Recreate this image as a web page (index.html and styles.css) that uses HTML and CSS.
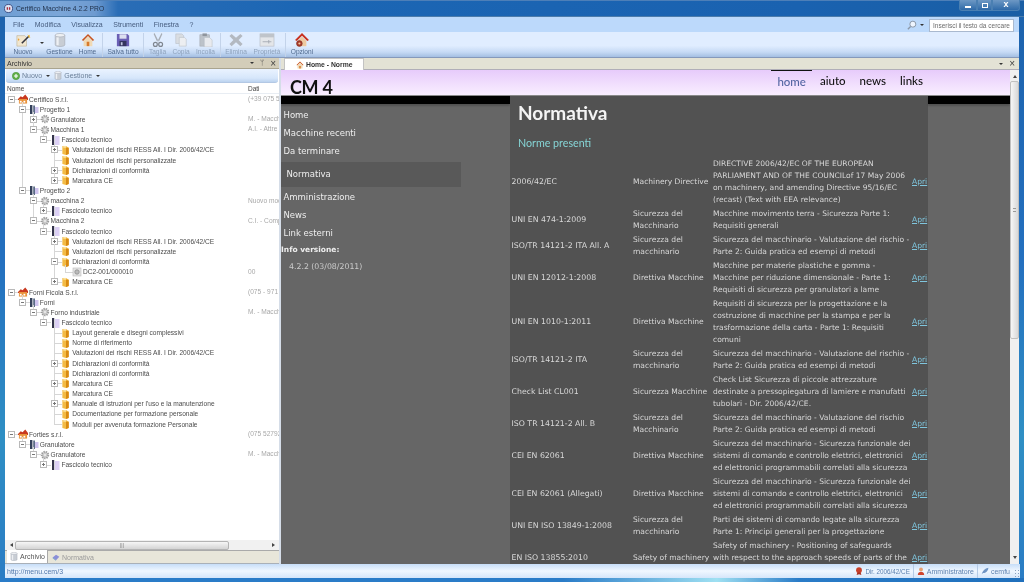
FILE: index.html
```html
<!DOCTYPE html>
<html lang="it">
<head>
<meta charset="utf-8">
<title>Certifico Macchine 4.2.2 PRO</title>
<link rel="stylesheet" href="styles.css">
</head>
<body>
<svg class="defs" width="0" height="0" aria-hidden="true">
  <symbol id="i-folder" viewBox="0 0 10 11"><path d="M1 1l4 0 3 2v7l-3 1-4-1z" fill="#f3bb45"/><path d="M5 3h3v7l-3 1z" fill="#d88a12"/><path d="M2 1h3v2H2z" fill="#fbe3a0"/></symbol>
  <symbol id="i-gear" viewBox="0 0 10 10"><circle cx="5" cy="5" r="3.2" fill="#d8d8d8" stroke="#9a9a9a" stroke-width="2" stroke-dasharray="1.3 .9"/><circle cx="5" cy="5" r="1.5" fill="#f2f2f2" stroke="#aaa" stroke-width=".5"/></symbol>
  <symbol id="i-binder" viewBox="0 0 10 10"><rect x="5" y="1" width="4.5" height="9" fill="#dcd0f5"/><rect x="2" y="0" width="2.2" height="10" fill="#34344c"/></symbol>
  <symbol id="i-proj" viewBox="0 0 10 10"><rect x="6" y="3" width="3.5" height="6" fill="#cfc4ee"/><rect x="1" y="1" width="2.4" height="9" fill="#34405a"/><rect x="4.2" y="1.5" width="1.8" height="8.5" fill="#5b6b86"/></symbol>
  <symbol id="i-co" viewBox="0 0 11 10"><path d="M0 5l3-3 2 1 3-3 3 4v2H0z" fill="#c8381e"/><rect x="1" y="5" width="9" height="5" fill="#e9923a"/><rect x="2" y="7" width="2" height="2" fill="#fff"/><rect x="6" y="7" width="2" height="2" fill="#fff"/></symbol>
  <symbol id="i-doc" viewBox="0 0 10 10"><rect x="1" y="1" width="8" height="8" fill="#e4e4e4" stroke="#bbb" stroke-width=".6"/><circle cx="5" cy="5" r="2.2" fill="#bbb" stroke="#8e8e8e" stroke-width=".8"/></symbol>
  <symbol id="i-cyl" viewBox="0 0 14 16"><path d="M1.5 2.5v11c0 1.2 2.400 2 5.500 2s5.500-.8 5.500-2v-11z" fill="#c8cdd4" stroke="#9aa0aa" stroke-width=".6"/><ellipse cx="7" cy="2.500" rx="5.500" ry="2" fill="#eef0f3" stroke="#9aa0aa" stroke-width=".6"/><rect x="3" y="5" width="2.500" height="9" fill="#eef0f3"/></symbol>
  <symbol id="i-house" viewBox="0 0 16 16"><path d="M8 1L1 8l1.500 1L8 3.500 13.500 9 15 8z" fill="#c8541e"/><path d="M3 9l5-5 5 5v6H3z" fill="#f0d9b5"/><rect x="6.500" y="10" width="3" height="5" fill="#d77a2c"/></symbol>
  <symbol id="i-wand" viewBox="0 0 18 16"><path d="M2 3h9l2 2v10H2z" fill="#f1e6cf" stroke="#b7a98a" stroke-width=".6"/><path d="M7 11l8-8 1.300 1.300-8 8z" fill="#34343e"/><path d="M14 1l1 1.500 1.800-.4-.5 1.700 1.200 1.200-1.800.3" fill="#f2b72c"/><path d="M4 6l1 1.500L4 9 3 7.500z" fill="#e9a23a"/></symbol>
  <symbol id="i-floppy" viewBox="0 0 16 16"><path d="M1 1h12l2 2v12H1z" fill="#6a5fb5"/><rect x="4" y="1.500" width="8" height="5" fill="#dcdff0"/><rect x="4" y="9" width="8" height="6" fill="#34345e"/><rect x="5.500" y="10.500" width="2" height="3.500" fill="#bfc3dd"/></symbol>
  <symbol id="i-scissors" viewBox="0 0 14 16"><path d="M3 0l5 10-1.500 1L2 1zM11 0L6 10l1.500 1L12 1z" fill="#a7adb5"/><circle cx="4" cy="13" r="2.200" fill="none" stroke="#7f8690" stroke-width="1.400"/><circle cx="10" cy="13" r="2.200" fill="none" stroke="#7f8690" stroke-width="1.400"/></symbol>
  <symbol id="i-copy" viewBox="0 0 14 16"><path d="M1 1h7l2 2v9H1z" fill="#d9dde2" stroke="#b4bac2" stroke-width=".6"/><path d="M5 5h6l2 2v8H5z" fill="#eceef1" stroke="#b4bac2" stroke-width=".6"/></symbol>
  <symbol id="i-paste" viewBox="0 0 16 16"><rect x="1" y="2" width="11" height="13" fill="#bcc2c9" stroke="#a0a6ae" stroke-width=".6"/><rect x="4" y="0.500" width="5" height="3" fill="#8f959d"/><path d="M6 5h6l3 3v8H6z" fill="#e8eaee" stroke="#b4bac2" stroke-width=".6"/></symbol>
  <symbol id="i-x" viewBox="0 0 16 16"><path d="M3 1l5 4.500L13 1l2.500 2.500L11 8l4.500 4.500L13 15l-5-4.500L3 15 .5 12.500 5 8 .5 3.500z" fill="#b3b9c1"/></symbol>
  <symbol id="i-props" viewBox="0 0 18 16"><rect x="1" y="1" width="16" height="14" fill="#e4e6e9" stroke="#b4bac2" stroke-width=".7"/><rect x="1" y="1" width="16" height="4" fill="#bfc4ca"/><path d="M4 10h10M11 8v4" stroke="#a2a8b0" stroke-width="1"/></symbol>
  <symbol id="i-opt" viewBox="0 0 18 16"><path d="M9 0L1 8l2 1 6-6 6 6 2-1z" fill="#c8301e"/><path d="M4 9l5-5 5 5v6H4z" fill="#eec9a0"/><circle cx="6" cy="12" r="3.300" fill="#a83a2a" stroke="#7a2a20" stroke-width=".6"/><circle cx="6" cy="12" r="1.200" fill="#eec9a0"/></symbol>
  <symbol id="i-plus" viewBox="0 0 10 10"><circle cx="5" cy="5" r="4.600" fill="#62b14a" stroke="#468a36" stroke-width=".6"/><path d="M5 2.500v5M2.500 5h5" stroke="#fff" stroke-width="1.400"/></symbol>
  <symbol id="i-norm" viewBox="0 0 12 10"><path d="M1 5l5-4 5 3-5 5z" fill="#8a8fd8"/><path d="M1 5l5 4v1L1 6z" fill="#5a9ac0"/></symbol>
  <symbol id="i-ribbon" viewBox="0 0 10 10"><circle cx="5" cy="4" r="3.600" fill="#c8402a"/><path d="M3 7l-1 3 3-1 3 1-1-3z" fill="#a83020"/></symbol>
  <symbol id="i-user" viewBox="0 0 10 10"><circle cx="5" cy="3" r="2.400" fill="#e8a070"/><path d="M1 10c0-3 2-4 4-4s4 1 4 4z" fill="#d0452e"/></symbol>
  <symbol id="i-feather" viewBox="0 0 12 10"><path d="M1 10C2 5 6 1 11 0c0 4-3 8-8 8z" fill="#6f94c4"/></symbol>
  <symbol id="i-search" viewBox="0 0 12 12"><circle cx="7" cy="5" r="3.600" fill="#eef5ff" stroke="#8b98a8" stroke-width="1.200"/><path d="M4.300 7.700L1 11" stroke="#8b98a8" stroke-width="1.600"/></symbol>
  <symbol id="i-app" viewBox="0 0 10 10"><circle cx="5" cy="5" r="4.500" fill="#dfe4f4" stroke="#36487e" stroke-width="1"/><path d="M3 3.500h1.500v3H3zM5.500 3.500H7v3H5.500z" fill="#a82a3a"/></symbol>
</svg>

<div class="app">
  <header class="titlebar">
    <svg class="ico-app"><use href="#i-app"/></svg>
    <span class="title">Certifico Macchine 4.2.2 PRO</span>
    <div class="winbtns">
      <span class="wb wb-min"><i></i></span>
      <span class="wb wb-max"><i></i></span>
      <span class="wb wb-close">x</span>
    </div>
  </header>

  <nav class="menubar">
    <span class="mi m-file">File</span>
    <span class="mi">Modifica</span>
    <span class="mi">Visualizza</span>
    <span class="mi">Strumenti</span>
    <span class="mi">Finestra</span>
    <span class="mi">?</span>
    <div class="search">
      <svg class="ico-search"><use href="#i-search"/></svg>
      <span class="arrow dark"></span>
      <div class="search-box">Inserisci il testo da cercare</div>
    </div>
  </nav>

  <div class="toolbar">
    <div class="tb tb-nuovo"><svg><use href="#i-wand"/></svg><span>Nuovo</span></div>
    <span class="arrow black tb-arrow"></span>
    <div class="tb tb-gest"><svg><use href="#i-cyl"/></svg><span>Gestione</span></div>
    <div class="tb tb-home"><svg><use href="#i-house"/></svg><span>Home</span></div>
    <i class="sep s1"></i>
    <div class="tb tb-salva"><svg><use href="#i-floppy"/></svg><span>Salva tutto</span></div>
    <i class="sep s2"></i>
    <div class="tb off tb-taglia"><svg><use href="#i-scissors"/></svg><span>Taglia</span></div>
    <div class="tb off tb-copia"><svg><use href="#i-copy"/></svg><span>Copia</span></div>
    <div class="tb off tb-incolla"><svg><use href="#i-paste"/></svg><span>Incolla</span></div>
    <i class="sep s3"></i>
    <div class="tb off tb-elimina"><svg><use href="#i-x"/></svg><span>Elimina</span></div>
    <div class="tb off tb-prop"><svg><use href="#i-props"/></svg><span>Proprietà</span></div>
    <i class="sep s4"></i>
    <div class="tb tb-opz"><svg><use href="#i-opt"/></svg><span>Opzioni</span></div>
  </div>

  <main class="workspace">
    <section class="left">
      <div class="pane-head">
        <span>Archivio</span>
        <div class="pane-tools"><span class="arrow black"></span><span class="pin">ᛘ</span><span class="cross">×</span></div>
      </div>
      <div class="subbar">
        <svg class="ico-plus"><use href="#i-plus"/></svg><span>Nuovo</span><span class="arrow black"></span>
        <svg class="ico-cyl"><use href="#i-cyl"/></svg><span>Gestione</span><span class="arrow black"></span>
      </div>
      <div class="cols"><span class="col-name">Nome</span><span class="col-dati">Dati</span></div>
      <div class="tree-body">
        <ul class="tree">
          <li><div class="row"><b class="exp minus"></b><svg class="c"><use href="#i-co"/></svg><span>Certifico S.r.l.</span></div>
            <ul>
              <li><div class="row"><b class="exp minus"></b><svg><use href="#i-proj"/></svg><span>Progetto 1</span></div>
                <ul>
                  <li><div class="row"><b class="exp plus"></b><svg><use href="#i-gear"/></svg><span>Granulatore</span></div></li>
                  <li><div class="row"><b class="exp minus"></b><svg><use href="#i-gear"/></svg><span>Macchina 1</span></div>
                    <ul>
                      <li><div class="row"><b class="exp minus"></b><svg><use href="#i-binder"/></svg><span>Fascicolo tecnico</span></div>
                        <ul>
                          <li><div class="row"><b class="exp plus"></b><svg><use href="#i-folder"/></svg><span>Valutazioni dei rischi RESS All. I Dir. 2006/42/CE</span></div></li>
                          <li><div class="row"><b class="exp none"></b><svg><use href="#i-folder"/></svg><span>Valutazioni dei rischi personalizzate</span></div></li>
                          <li><div class="row"><b class="exp plus"></b><svg><use href="#i-folder"/></svg><span>Dichiarazioni di conformità</span></div></li>
                          <li><div class="row"><b class="exp plus"></b><svg><use href="#i-folder"/></svg><span>Marcatura CE</span></div></li>
                        </ul>
                      </li>
                    </ul>
                  </li>
                </ul>
              </li>
              <li><div class="row"><b class="exp minus"></b><svg><use href="#i-proj"/></svg><span>Progetto 2</span></div>
                <ul>
                  <li><div class="row"><b class="exp minus"></b><svg><use href="#i-gear"/></svg><span>macchina 2</span></div>
                    <ul>
                      <li><div class="row"><b class="exp plus"></b><svg><use href="#i-binder"/></svg><span>Fascicolo tecnico</span></div></li>
                    </ul>
                  </li>
                  <li><div class="row"><b class="exp minus"></b><svg><use href="#i-gear"/></svg><span>Macchina 2</span></div>
                    <ul>
                      <li><div class="row"><b class="exp minus"></b><svg><use href="#i-binder"/></svg><span>Fascicolo tecnico</span></div>
                        <ul>
                          <li><div class="row"><b class="exp plus"></b><svg><use href="#i-folder"/></svg><span>Valutazioni dei rischi RESS All. I Dir. 2006/42/CE</span></div></li>
                          <li><div class="row"><b class="exp none"></b><svg><use href="#i-folder"/></svg><span>Valutazioni dei rischi personalizzate</span></div></li>
                          <li><div class="row"><b class="exp minus"></b><svg><use href="#i-folder"/></svg><span>Dichiarazioni di conformità</span></div>
                            <ul>
                              <li><div class="row"><b class="exp none"></b><svg><use href="#i-doc"/></svg><span>DC2-001/000010</span></div></li>
                            </ul>
                          </li>
                          <li><div class="row"><b class="exp plus"></b><svg><use href="#i-folder"/></svg><span>Marcatura CE</span></div></li>
                        </ul>
                      </li>
                    </ul>
                  </li>
                </ul>
              </li>
            </ul>
          </li>
          <li><div class="row"><b class="exp minus"></b><svg class="c"><use href="#i-co"/></svg><span>Forni Ficola S.r.l.</span></div>
            <ul>
              <li><div class="row"><b class="exp minus"></b><svg><use href="#i-proj"/></svg><span>Forni</span></div>
                <ul>
                  <li><div class="row"><b class="exp minus"></b><svg><use href="#i-gear"/></svg><span>Forno industriale</span></div>
                    <ul>
                      <li><div class="row"><b class="exp minus"></b><svg><use href="#i-binder"/></svg><span>Fascicolo tecnico</span></div>
                        <ul>
                          <li><div class="row"><b class="exp none"></b><svg><use href="#i-folder"/></svg><span>Layout generale e disegni complessivi</span></div></li>
                          <li><div class="row"><b class="exp none"></b><svg><use href="#i-folder"/></svg><span>Norme di riferimento</span></div></li>
                          <li><div class="row"><b class="exp none"></b><svg><use href="#i-folder"/></svg><span>Valutazioni dei rischi RESS All. I Dir. 2006/42/CE</span></div></li>
                          <li><div class="row"><b class="exp plus"></b><svg><use href="#i-folder"/></svg><span>Dichiarazioni di conformità</span></div></li>
                          <li><div class="row"><b class="exp none"></b><svg><use href="#i-folder"/></svg><span>Dichiarazioni di conformità</span></div></li>
                          <li><div class="row"><b class="exp plus"></b><svg><use href="#i-folder"/></svg><span>Marcatura CE</span></div></li>
                          <li><div class="row"><b class="exp none"></b><svg><use href="#i-folder"/></svg><span>Marcatura CE</span></div></li>
                          <li><div class="row"><b class="exp plus"></b><svg><use href="#i-folder"/></svg><span>Manuale di istruzioni per l'uso e la manutenzione</span></div></li>
                          <li><div class="row"><b class="exp none"></b><svg><use href="#i-folder"/></svg><span>Documentazione per formazione personale</span></div></li>
                          <li><div class="row"><b class="exp none"></b><svg><use href="#i-folder"/></svg><span>Moduli per avvenuta formazione Personale</span></div></li>
                        </ul>
                      </li>
                    </ul>
                  </li>
                </ul>
              </li>
            </ul>
          </li>
          <li><div class="row"><b class="exp minus"></b><svg class="c"><use href="#i-co"/></svg><span>Forties s.r.l.</span></div>
            <ul>
              <li><div class="row"><b class="exp minus"></b><svg><use href="#i-proj"/></svg><span>Granulatore</span></div>
                <ul>
                  <li><div class="row"><b class="exp minus"></b><svg><use href="#i-gear"/></svg><span>Granulatore</span></div>
                    <ul>
                      <li><div class="row"><b class="exp plus"></b><svg><use href="#i-binder"/></svg><span>Fascicolo tecnico</span></div></li>
                    </ul>
                  </li>
                </ul>
              </li>
            </ul>
          </li>
        </ul>
        <div class="dati">
          <div>(+39 075 5</div><div></div><div>M. - Macch</div><div>A.I. - Attre</div><div></div><div></div><div></div><div></div><div></div><div></div>
          <div>Nuovo moc</div><div></div><div>C.I. - Comp</div><div></div><div></div><div></div><div></div><div>00</div><div></div>
          <div>(075 - 971</div><div></div><div>M. - Macch</div><div></div><div></div><div></div><div></div><div></div><div></div><div></div><div></div><div></div><div></div><div></div>
          <div>(075 52792</div><div></div><div>M. - Macch</div><div></div>
        </div>
      </div>
      <div class="hscroll"><span class="tri tri-l"></span><div class="hthumb"><i>|||</i></div><span class="tri tri-r"></span></div>
      <div class="lefttabs">
        <div class="ltab active"><svg><use href="#i-cyl"/></svg>Archivio</div>
        <div class="ltab"><svg><use href="#i-norm"/></svg>Normativa</div>
      </div>
    </section>

    <section class="right">
      <div class="tabstrip">
        <div class="doctab"><svg><use href="#i-house"/></svg><span>Home - Norme</span></div>
        <div class="strip-tools"><span class="arrow black"></span><span class="cross">×</span></div>
      </div>
      <div class="webwrap">
        <div class="web">
          <div class="webhead">
            <div class="logo">CM 4</div>
            <div class="topnav">
              <a class="cur">home</a><a>aiuto</a><a>news</a><a>links</a>
            </div>
          </div>
          <div class="webbody">
            <aside class="side">
              <div class="blackbar"></div>
              <ul class="sidenav">
                <li>Home</li>
                <li>Macchine recenti</li>
                <li>Da terminare</li>
                <li class="sel">Normativa</li>
                <li>Amministrazione</li>
                <li>News</li>
                <li>Link esterni</li>
              </ul>
              <div class="ver-t">Info versione:</div>
              <div class="ver">4.2.2 (03/08/2011)</div>
            </aside>
            <article class="content">
              <h1>Normativa</h1>
              <h2>Norme presenti</h2>
              <table>
                <tr><td>2006/42/EC</td><td>Machinery Directive</td><td>DIRECTIVE 2006/42/EC OF THE EUROPEAN<br>PARLIAMENT AND OF THE COUNCILof 17 May 2006<br>on machinery, and amending Directive 95/16/EC<br>(recast) (Text with EEA relevance)</td><td><a>Apri</a></td></tr>
                <tr><td>UNI EN 474-1:2009</td><td>Sicurezza del<br>Macchinario</td><td>Macchine movimento terra - Sicurezza Parte 1:<br>Requisiti generali</td><td><a>Apri</a></td></tr>
                <tr><td>ISO/TR 14121-2 ITA All. A</td><td>Sicurezza del<br>macchinario</td><td>Sicurezza del macchinario - Valutazione del rischio -<br>Parte 2: Guida pratica ed esempi di metodi</td><td><a>Apri</a></td></tr>
                <tr><td>UNI EN 12012-1:2008</td><td>Direttiva Macchine</td><td>Macchine per materie plastiche e gomma -<br>Macchine per riduzione dimensionale - Parte 1:<br>Requisiti di sicurezza per granulatori a lame</td><td><a>Apri</a></td></tr>
                <tr><td>UNI EN 1010-1:2011</td><td>Direttiva Macchine</td><td>Requisiti di sicurezza per la progettazione e la<br>costruzione di macchine per la stampa e per la<br>trasformazione della carta - Parte 1: Requisiti<br>comuni</td><td><a>Apri</a></td></tr>
                <tr><td>ISO/TR 14121-2 ITA</td><td>Sicurezza del<br>macchinario</td><td>Sicurezza del macchinario - Valutazione del rischio -<br>Parte 2: Guida pratica ed esempi di metodi</td><td><a>Apri</a></td></tr>
                <tr><td>Check List CL001</td><td>Sicurezza Macchine</td><td>Check List Sicurezza di piccole attrezzature<br>destinate a pressopiegatura di lamiere e manufatti<br>tubolari - Dir. 2006/42/CE.</td><td><a>Apri</a></td></tr>
                <tr><td>ISO TR 14121-2 All. B</td><td>Sicurezza del<br>Macchinario</td><td>Sicurezza del macchinario - Valutazione del rischio<br>Parte 2: Guida pratica ed esempi di metodi</td><td><a>Apri</a></td></tr>
                <tr><td>CEI EN 62061</td><td>Direttiva Macchine</td><td>Sicurezza del macchinario - Sicurezza funzionale dei<br>sistemi di comando e controllo elettrici, elettronici<br>ed elettronici programmabili correlati alla sicurezza</td><td><a>Apri</a></td></tr>
                <tr><td>CEI EN 62061 (Allegati)</td><td>Direttiva Macchine</td><td>Sicurezza del macchinario - Sicurezza funzionale dei<br>sistemi di comando e controllo elettrici, elettronici<br>ed elettronici programmabili correlati alla sicurezza</td><td><a>Apri</a></td></tr>
                <tr><td>UNI EN ISO 13849-1:2008</td><td>Sicurezza del<br>macchinario</td><td>Parti dei sistemi di comando legate alla sicurezza<br>Parte 1: Principi generali per la progettazione</td><td><a>Apri</a></td></tr>
                <tr><td>EN ISO 13855:2010</td><td>Safety of machinery</td><td>Safety of machinery - Positioning of safeguards<br>with respect to the approach speeds of parts of the<br>human body</td><td><a>Apri</a></td></tr>
              </table>
            </article>
            <div class="margin"><div class="blackbar"></div></div>
          </div>
        </div>
        <div class="vscroll"><span class="tri tri-u"></span><div class="vthumb"><i></i></div><div class="vtrack"></div><span class="tri tri-d"></span></div>
      </div>
    </section>
  </main>

  <footer class="status">
    <span class="url">http://menu.cem/3</span>
    <div class="st-right">
      <div class="st st-dir"><svg><use href="#i-ribbon"/></svg>Dir. 2006/42/CE</div>
      <div class="st"><svg><use href="#i-user"/></svg>Amministratore</div>
      <div class="st st-last"><svg><use href="#i-feather"/></svg>cemfu</div>
      <span class="grip"></span>
    </div>
  </footer>
  <div class="winbottom"></div>
</div>
</body>
</html>
```
FILE: styles.css
```css
* { box-sizing: border-box; }
html, body { margin: 0; padding: 0; height: 582px; overflow: hidden; background: #1c66b4; }
.defs { position: absolute; }
ul { list-style: none; margin: 0; padding: 0; }
svg { display: block; flex: none; }

.app {
  width: 1024px; height: 582px; display: flex; flex-direction: column; overflow: hidden;
  font-family: "Liberation Sans", Arial, sans-serif;
  background: linear-gradient(180deg, #1d62ac 0%, #2470bf 45%, #2f8fc4 75%, #2a7cc4 100%);
  filter: blur(.3px);
}

/* title */
.titlebar {
  height: 17px; display: flex; align-items: center; padding-left: 4px; flex: none;
  background: linear-gradient(90deg, #6f9ed3 0, #7ba6d8 60px, #6d9ad0 95px, #2a6db6 118px, #1c66b4 300px, #1a62b0 800px, #1a5ea4 100%);
  border-top: 1px solid #4d7fb8; border-bottom: 1px solid #4c7cab;
}
.ico-app { width: 9px; height: 9px; }
.title { margin-left: 3px; font-size: 6.700px; color: #1f2f48; }
.winbtns { margin-left: auto; margin-right: 4px; align-self: flex-start; display: flex; height: 11px; margin-top: -1px; }
.wb { height: 11px; display: flex; align-items: center; justify-content: center; color: #fff; border: 1px solid #4a7fb2; border-top: 0; background: linear-gradient(#6d98c4, #2f6aa8); }
.wb-min { width: 18px; border-radius: 0 0 0 3px; }
.wb-min i { width: 6px; height: 2px; background: #fff; margin-top: 3px; }
.wb-max { width: 15px; }
.wb-max i { width: 6px; height: 5px; border: 1.500px solid #fff; }
.wb-close { width: 28px; font-size: 9px; font-weight: 700; line-height: 9px; padding-bottom: 2px; border-radius: 0 0 3px 0; }

/* menu */
.menubar { height: 15px; flex: none; display: flex; align-items: center; background: #bcd9fb; font-size: 7px; color: #465c7e; gap: 10.500px; border-left: 5px solid transparent; background-clip: padding-box; padding-left: 8px; border-right: 5px solid transparent; }
.search { margin-left: auto; display: flex; align-items: center; margin-right: 5px; }
.ico-search { width: 10px; height: 10px; margin-right: 3px; }
.search-box { width: 85px; height: 13px; margin-left: 5px; background: #fff; border: 1px solid #a9b9cf; color: #6b6b6b; font-size: 6.500px; line-height: 11px; padding-left: 3px; white-space: nowrap; overflow: hidden; margin-top: 1px; }
.arrow { display: inline-block; width: 0; height: 0; border: 2px solid transparent; border-top: 2.500px solid #333; border-bottom: 0; flex: none; }

/* toolbar */
.toolbar {
  height: 26px; flex: none; display: flex; align-items: flex-start; position: relative;
  margin: 0 5px;
  background: linear-gradient(180deg, #e0edff 0, #e0edff 55%, #c6daf5 80%, #a4bfe2 100%);
  border-bottom: 1px solid #8599bb;
}
.tb { display: flex; flex-direction: column; align-items: center; font-size: 6.600px; color: #506a8e; white-space: nowrap; padding-top: 1px; }
.tb svg { width: 16px; height: 14px; }
.tb.off { color: #8fa3bd; }
.tb span { line-height: 10px; }
.tb-nuovo { margin-left: 8px; width: 20px; }
.tb-arrow { margin: 10px 0 0 7px; }
.tb-gest { margin-left: 2px; width: 27px; }
.tb-home { margin-left: 5px; width: 19px; }
.sep { width: 1px; height: 24px; background: #c3d3ea; margin: 1px 0 0; }
.s1 { margin-left: 5px; }
.tb-salva { margin-left: 4px; width: 32px; }
.s2 { margin-left: 4px; }
.tb-taglia { margin-left: 4px; width: 19px; }
.tb-copia { margin-left: 5px; width: 18px; }
.tb-incolla { margin-left: 5px; width: 21px; }
.s3 { margin-left: 4px; }
.tb-elimina { margin-left: 4px; width: 22px; }
.tb-prop { margin-left: 6px; width: 28px; }
.s4 { margin-left: 4px; }
.tb-opz { margin-left: 4px; width: 24px; }

/* workspace */
.workspace { flex: 1; min-height: 0; display: flex; padding: 0 5px; }
.left { width: 274px; flex: none; display: flex; flex-direction: column; background: #fff; }
.pane-head {
  height: 11px; flex: none; display: flex; align-items: center; justify-content: space-between;
  background: #d3cdb9; font-size: 7px; color: #333; padding-left: 2px; border-bottom: 1px solid #a9a48f;
}
.pane-tools { display: flex; align-items: center; gap: 6px; padding-right: 3px; color: #444; }
.pin { font-size: 7px; line-height: 8px; }
.cross { font-size: 10px; line-height: 9px; color: #444; }
.subbar {
  height: 14px; flex: none; display: flex; align-items: center; margin: 0 1px;
  font-size: 7px; color: #6a7f98;
  background: linear-gradient(180deg, #eaf3ff, #d6e6fb 70%, #bcd3ef);
  border-bottom: 1px solid #b3c8e4; border-radius: 0 0 3px 3px;
}
.ico-plus { width: 8px; height: 8px; margin: 0 2px 0 6px; }
.subbar .arrow { margin: 0 4px; }
.ico-cyl { width: 8px; height: 9px; margin-right: 2px; }
.cols { height: 11px; flex: none; display: flex; align-items: flex-start; font-size: 6.500px; color: #444; line-height: 9px; border-bottom: 1px solid #e8edf3; padding-top: 1px; }
.col-name { width: 243px; padding-left: 2px; }

.tree-body { flex: 1; min-height: 0; display: grid; grid-template-columns: 243px 31px; overflow: hidden; font-size: 6.600px; color: #4c4c4c; }
.tree { padding-left: 3px; }
.tree ul { padding-left: 10.800px; }
.tree li { position: relative; }
.tree ul > li::before { content: ""; position: absolute; left: 3px; top: -2px; bottom: 0; width: 1px; background: #d6d6d6; }
.tree ul > li:last-child::before { bottom: auto; height: 7px; }
.row { height: 10.167px; display: flex; align-items: center; white-space: nowrap; position: relative; }
.row::before { content: ""; position: absolute; left: 3px; top: 5px; width: 8px; height: 1px; background: #d6d6d6; }
.row svg { width: 10px; height: 10px; margin: 0 1px 0 3px; position: relative; }
.row span { position: relative; background: #fff; }
.exp { width: 7px; height: 7px; display: block; flex: none; position: relative; background: #fff; border: 1px solid #b9b9b9; }
.exp::after { content: ""; position: absolute; left: 1px; top: 2px; width: 3px; height: 1px; background: #777; }
.exp.plus::before { content: ""; position: absolute; left: 2px; top: 1px; width: 1px; height: 3px; background: #777; }
.exp.none { visibility: hidden; }
.dati { color: #a8a8a8; overflow: hidden; white-space: nowrap; }
.dati div { height: 10.167px; line-height: 10px; }

.hscroll { height: 10px; flex: none; display: flex; align-items: center; background: #f1f1f1; }
.tri { width: 0; height: 0; border: 2px solid transparent; flex: none; }
.tri-l { border-right: 3px solid #444; border-left: 0; margin-left: 5px; }
.tri-r { border-left: 3px solid #444; border-right: 0; margin-left: auto; margin-right: 4px; }
.hthumb { width: 214px; height: 9px; margin-left: 2px; background: linear-gradient(#f6f6f6, #d4d4d4); border: 1px solid #b4b4b4; border-radius: 2px; display: flex; align-items: center; justify-content: center; color: #777; font-size: 5px; }
.hthumb i { font-style: normal; }
.lefttabs { height: 14px; flex: none; display: flex; background: #e8e6da; border-top: 1px solid #aaa; font-size: 7px; color: #9a9a9a; padding-left: 2px; border-bottom: 1px solid #a9b0b8; }
.ltab { display: flex; align-items: center; gap: 2px; padding: 0 3px; white-space: nowrap; }
.ltab svg { width: 8px; height: 9px; }
.ltab.active { background: #fff; color: #555; width: 41px; border-right: 1px solid #aaa; margin: -1px 1px 0 0; }

.right { width: 740px; flex: none; display: flex; flex-direction: column; background: #666; overflow: hidden; border-left: 2px solid #d5dde8; }
.tabstrip { height: 12px; flex: none; display: flex; align-items: flex-end; justify-content: space-between; background: #e3e2d5; padding-left: 3px; border-bottom: 1px solid #b0aeb8; }
.doctab { width: 80px; height: 12px; margin-bottom: -1px; display: flex; align-items: center; background: #fff; border: 1px solid #c3c3c3; border-bottom: 0; padding-left: 11px; font-size: 6.800px; font-weight: 700; color: #333; position: relative; }
.doctab svg { width: 8px; height: 8px; margin-right: 2px; }
.strip-tools { display: flex; align-items: center; gap: 6px; padding-right: 4px; height: 11px; }
.webwrap { flex: 1; min-height: 0; display: flex; }
.web { width: 729px; flex: none; overflow: hidden; background: #666; }
.webhead { height: 26px; display: flex; justify-content: space-between; background: linear-gradient(180deg, #e7cbfb, #f9eeff); border-bottom: 1px solid #8a8a8a; font-family: Lato, sans-serif; }
.logo { font-size: 18px; font-weight: 700; color: #111; line-height: 22px; margin: 6px 0 0 9px; letter-spacing: -.3px; }
.topnav { display: flex; gap: 14px; margin-right: 87px; font-size: 11.500px; color: #111; line-height: 16px; padding-top: 3px; font-weight: 500; }
.topnav .cur { color: #5366a2; position: relative; margin-top: 1px; }
.topnav .cur::before { content: ""; position: absolute; left: -6px; right: -6px; top: -4px; height: 1px; background: #111; }
.webbody { display: grid; grid-template-columns: 229px 418px 82px; font-family: "DejaVu Sans", sans-serif; }
.blackbar { height: 8px; background: #000; box-shadow: 0 2px 2px rgba(0,0,0,.2); }
.side { color: #eee; font-size: 8.500px; }
.sidenav { padding-top: 2px; }
.sidenav li { height: 18px; line-height: 18px; padding-left: 2.500px; }
.sidenav li.sel { width: 180px; height: 25px; line-height: 25px; background: #595959; padding-left: 5.500px; margin: 2px 0 1px; }
.ver-t { font-weight: 700; font-size: 7.500px; line-height: 12px; margin-top: 2px; }
.ver { font-size: 7.800px; color: #ccc; padding-left: 8px; line-height: 12px; margin-top: 5px; }
.content { background: #525252; color: #d8d8d8; }
h1 { font-family: Lato, sans-serif; margin: 6px 0 0 8px; font-size: 19px; font-weight: 700; line-height: 22px; color: #f4f4f4; }
h2 { font-family: Lato, sans-serif; margin: 12px 0 6.500px 8px; font-size: 10.700px; font-weight: 400; line-height: 14px; color: #86d5d6; }
table { border-collapse: collapse; table-layout: fixed; width: 418px; font-size: 7.550px; line-height: 12px; }
td { padding: 1px 0; vertical-align: middle; white-space: nowrap; }
td:nth-child(1) { width: 123px; padding-left: 1.500px; font-size: 7.800px; }
td:nth-child(2) { width: 80px; }
td:nth-child(3) { width: 199px; }
td a { color: #7fc6de; text-decoration: underline; }

.vscroll { width: 9px; flex: 1; display: flex; flex-direction: column; align-items: stretch; background: #f0f0f0; }
.tri-u { align-self: center; border-bottom: 3px solid #444; border-top: 0; margin: 5px 0 3px; }
.tri-d { align-self: center; border-top: 3px solid #444; border-bottom: 0; margin: 0 0 5px; }
.vthumb { height: 258px; background: linear-gradient(90deg, #f6f6f6, #d8d8d8); border: 1px solid #c0c0c0; border-radius: 2px; display: flex; align-items: center; justify-content: center; }
.vthumb i { width: 3px; height: 4px; border-top: 1px solid #999; border-bottom: 1px solid #999; }
.vtrack { flex: 1; }

/* status */
.status { height: 14px; flex: none; margin: 0 4px 0 5px; display: flex; align-items: center; justify-content: space-between; font-size: 7px; color: #4f76ab; padding-left: 2px; background: linear-gradient(180deg, #c7def8, #f0f7ff 50%, #d5e6fa); }
.st-right { display: flex; align-items: center; height: 100%; color: #5b7fae; }
.st { display: flex; align-items: center; gap: 2px; padding: 0 3px; border-right: 1px solid #b5cbe6; height: 100%; white-space: nowrap; }
.st-dir { font-size: 6.300px; }
.st-last { border-right: 0; padding-right: 0; }
.st svg { width: 8px; height: 8px; }
.grip { width: 6px; height: 8px; margin: 3px 0 0 4px; background-image: radial-gradient(#8aa0bd 30%, transparent 35%); background-size: 3px 3px; }
.winbottom { height: 4px; flex: none; background: linear-gradient(90deg, #2a7cc8 0, #2a7cc8 55%, #9fe0f2 70%, #2a7cc8 78%, #2070bc 100%); }
```
